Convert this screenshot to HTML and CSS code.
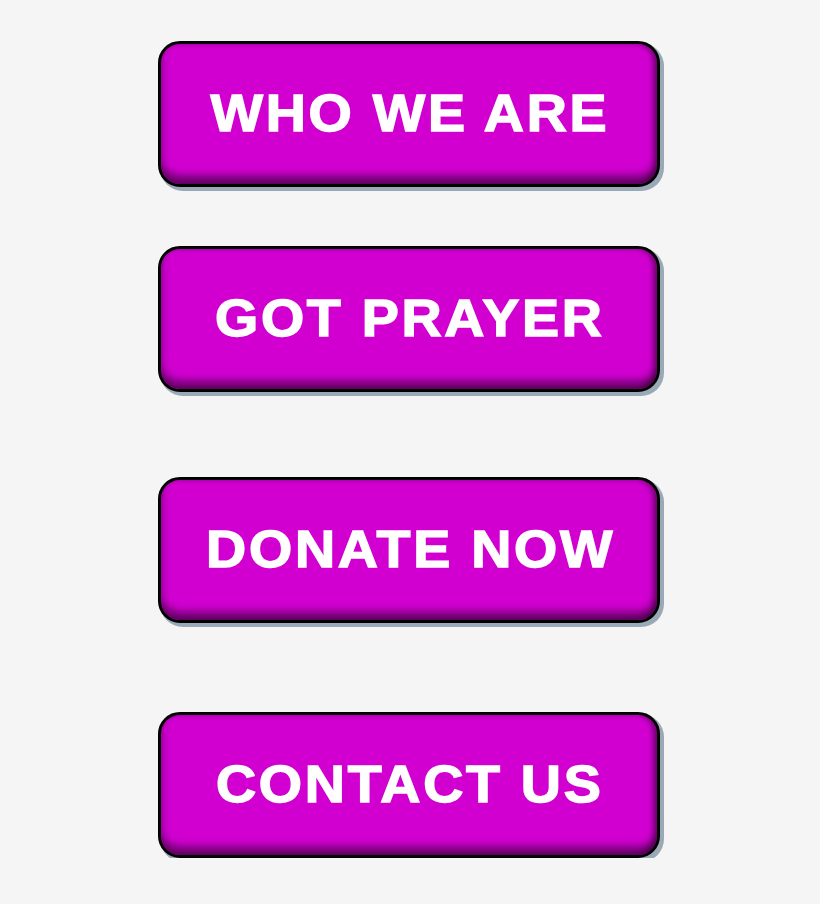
FILE: index.html
```html
<!DOCTYPE html>
<html lang="en">
<head>
    <meta charset="UTF-8">
    <title>Menu</title>
    <link rel="stylesheet" href="styles.css">
</head>
<body>
<div class="menu">
    <a class="menu-button first" href="#"><span>WHO WE ARE</span></a>
    <a class="menu-button second" href="#"><span>GOT PRAYER</span></a>
    <a class="menu-button third" href="#"><span>DONATE NOW</span></a>
    <a class="menu-button fourth" href="#"><span>CONTACT US</span></a>
</div>
</body>
</html>
```

FILE: styles.css
```css
body {
  margin: 0;
  background-color: #f5f5f5;
  font-family: "Liberation Sans", Arial, sans-serif;
}
.menu {
  display: flex;
  flex-direction: column;
  align-items: flex-start;
  padding: 41px 0 0 158px;
}
.menu-button {
  box-sizing: border-box;
  width: 502px;
  height: 146px;
  display: flex;
  justify-content: center;
  align-items: center;
  background: #d100d1;
  border: 3px solid #000;
  border-radius: 22px;
  box-shadow: inset 0 -8px 8px rgba(0,0,0,0.5), inset -4px 0 5px rgba(0,0,0,0.3), 3px 3px 0 1px #9aa9b6;
  color: #fff;
  text-decoration: none;
  font-weight: bold;
  font-size: 51px;
}
.menu-button span {
  display: inline-block;
  transform: scaleX(1.09);
  letter-spacing: 2.5px;
  margin-right: -2.5px;
  -webkit-text-stroke: 1.4px #fff;
  margin-top: -2px;
}
.second {
  margin-top: 59px;
}
.third {
  margin-top: 85px;
}
.fourth {
  margin-top: 89px;
}
```
